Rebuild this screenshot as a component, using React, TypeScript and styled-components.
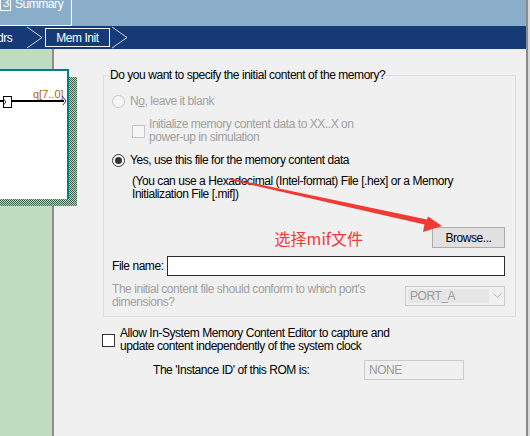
import React from "react";
import styled, { createGlobalStyle, css } from "styled-components";

const GlobalStyle = createGlobalStyle`
  html, body {
    margin: 0;
    padding: 0;
    background: #f0f0f0;
  }
  body {
    font-family: "Liberation Sans", Arial, sans-serif;
    font-size: 12px;
    letter-spacing: -0.45px;
    color: #000;
  }
`;

const Page = styled.div`
  position: relative;
  width: 530px;
  height: 436px;
  overflow: hidden;
  display: flex;
`;

const Column = styled.div`
  flex: 1;
  display: flex;
  flex-direction: column;
  min-width: 0;
`;

const EdgeStrip = styled.div`
  width: 2px;
  border-left: 2px solid #8a8a8a;
  background: #dadada;
`;

const TopBand = styled.div`
  height: 26px;
  background: #8aaeca;
  display: flex;
  align-items: flex-start;
`;

const Tab = styled.div`
  box-sizing: border-box;
  width: 73px;
  height: 26px;
  margin-left: -1px;
  border: 1px solid #fff;
  border-top: none;
  overflow: hidden;
`;

const TabInner = styled.div`
  display: flex;
  align-items: flex-end;
  gap: 4px;
  margin-top: -9px;
  color: #fff;
  line-height: 14px;
`;

const TabNum = styled.span`
  box-sizing: border-box;
  width: 11px;
  height: 20px;
  border: 1px solid #fff;
  display: flex;
  align-items: flex-end;
  justify-content: flex-end;
  padding: 0 1px 1px 0;
  line-height: 12px;
`;

const NavBand = styled.div`
  height: 23px;
  background: #153a76;
  display: flex;
  align-items: center;
  color: #fff;
`;

const Crumb = styled.span<{ $active?: boolean }>`
  box-sizing: border-box;
  height: 19px;
  display: flex;
  align-items: center;
  ${(p) =>
    p.$active &&
    css`
      border: 1px solid #f4f4f4;
      width: 65px;
      justify-content: center;
      margin: 0 2px;
    `}
`;

const CrumbText = styled.span`
  margin-left: -3px;
  width: 30px;
`;

const Main = styled.div`
  position: relative;
  flex: 1;
  display: flex;
`;

const SidePanel = styled.div`
  width: 52px;
  background: #c0dcc0;
  border-right: 2px solid #8c8c8c;
`;

const Content = styled.div`
  flex: 1;
  padding: 0 10px 0 49px;
  background: #f0f0f0;
`;

const GroupBox = styled.fieldset`
  margin: 19px 0 0 0;
  padding: 0 8px 7px 8px;
  border: 1px solid #dcdcdc;
  min-width: 0;
`;

const Legend = styled.legend`
  margin-left: -3px;
  padding: 0 1px;
  line-height: 14px;
`;

const Row = styled.div<{ $top: number; $indent?: number }>`
  display: flex;
  align-items: center;
  margin-top: ${(p) => p.$top}px;
  padding-left: ${(p) => p.$indent ?? 0}px;
  line-height: 13px;
`;

const Label = styled.span<{ $disabled?: boolean }>`
  color: ${(p) => (p.$disabled ? "#a0a0a0" : "#000")};
`;

const Radio = styled.span<{ $checked?: boolean; $disabled?: boolean }>`
  box-sizing: border-box;
  width: 13px;
  height: 13px;
  border-radius: 50%;
  border: 1px solid ${(p) => (p.$disabled ? "#c4c4c4" : "#333")};
  background: ${(p) => (p.$disabled ? "#f6f6f6" : "#fff")};
  margin-right: 5px;
  display: flex;
  align-items: center;
  justify-content: center;
  flex-shrink: 0;
  &::after {
    content: "";
    width: 7px;
    height: 7px;
    border-radius: 50%;
    background: #333;
    display: ${(p) => (p.$checked ? "block" : "none")};
  }
`;

const Check = styled.span<{ $disabled?: boolean }>`
  box-sizing: border-box;
  width: 13px;
  height: 13px;
  border: 1px solid ${(p) => (p.$disabled ? "#c4c4c4" : "#333")};
  background: ${(p) => (p.$disabled ? "#f6f6f6" : "#fff")};
  flex-shrink: 0;
`;

const Note = styled.div<{ $top: number; $indent: number; $disabled?: boolean }>`
  margin-top: ${(p) => p.$top}px;
  padding-left: ${(p) => p.$indent}px;
  line-height: 13px;
  color: ${(p) => (p.$disabled ? "#a0a0a0" : "#000")};
`;

const ButtonRow = styled.div`
  display: flex;
  justify-content: flex-end;
  align-items: center;
  gap: 69px;
  margin-top: 26px;
  padding-right: 2px;
`;

const RedNote = styled.span`
  font-family: "Noto Sans CJK SC", "Noto Sans", sans-serif;
  font-size: 16px;
  letter-spacing: 0;
  color: #f03a33;
  line-height: 18px;
`;

const Button = styled.button`
  box-sizing: border-box;
  width: 73px;
  height: 21px;
  border: 1px solid #adadad;
  background: #e1e1e1;
  font: inherit;
  letter-spacing: inherit;
  color: #000;
  padding: 0;
`;

const TextBox = styled.div<{ $width?: number; $disabled?: boolean }>`
  box-sizing: border-box;
  height: 20px;
  width: ${(p) => (p.$width ? `${p.$width}px` : "auto")};
  flex: ${(p) => (p.$width ? "none" : "1")};
  border: 1px solid ${(p) => (p.$disabled ? "#cccccc" : "#2b2b2b")};
  background: ${(p) => (p.$disabled ? "#f0f0f0" : "#fff")};
  color: #9a9a9a;
  display: flex;
  align-items: center;
  padding-left: 4px;
`;

const FileRow = styled.div`
  display: flex;
  align-items: center;
  gap: 3px;
  margin-top: 8px;
  padding-right: 2px;
`;

const PortRow = styled.div`
  display: flex;
  align-items: center;
  justify-content: space-between;
  margin-top: 7px;
  padding-right: 2px;
  line-height: 13px;
  color: #a0a0a0;
`;

const Select = styled.div`
  box-sizing: border-box;
  width: 100px;
  height: 20px;
  border: 1px solid #cccccc;
  background: #f0f0f0;
  display: flex;
  align-items: center;
  padding: 2px;
  gap: 4px;
`;

const SelectValue = styled.span`
  flex: 1;
  height: 100%;
  background: #e6e6e6;
  color: #9a9a9a;
  display: flex;
  align-items: center;
  padding-left: 2px;
`;

const EditorRow = styled.div`
  display: flex;
  align-items: center;
  gap: 5px;
  margin: 10px 0 0 -1px;
  line-height: 13px;
`;

const InstanceRow = styled.div`
  display: flex;
  align-items: center;
  margin-top: 7px;
  padding-left: 50px;
`;

const InstanceLabel = styled.span`
  width: 211px;
`;

const DiagramShadow = styled.div`
  position: absolute;
  left: -2px;
  top: 28px;
  width: 79px;
  height: 129px;
  background: repeating-conic-gradient(#3d6650 0 25%, #b9d0bd 0 50%) 0 0 / 2px 2px;
`;

const DiagramBox = styled.div`
  position: absolute;
  left: -2px;
  top: 20px;
  width: 71px;
  height: 130px;
  box-sizing: border-box;
  background: #fff;
  border-top: 2px solid #008080;
  border-right: 2px solid #008080;
  letter-spacing: 0;
`;

const Overlay = styled.svg`
  position: absolute;
  left: 0;
  top: 0;
  pointer-events: none;
`;

const Chevron = () => (
  <svg width="16" height="23" viewBox="0 0 16 23">
    <polyline points="0,1 15,11.5 0,22" fill="none" stroke="#c9d3e3" strokeWidth="1" />
  </svg>
);

export default function App() {
  return (
    <Page>
      <GlobalStyle />
      <Column>
        <TopBand>
          <Tab>
            <TabInner>
              <TabNum>3</TabNum>
              <span>Summary</span>
            </TabInner>
          </Tab>
        </TopBand>
        <NavBand>
          <CrumbText>drs</CrumbText>
          <Chevron />
          <Crumb $active>Mem Init</Crumb>
          <Chevron />
        </NavBand>
        <Main>
          <SidePanel />
          <Content>
            <GroupBox>
              <Legend>Do you want to specify the initial content of the memory?</Legend>
              <Row $top={13}>
                <Radio $disabled />
                <Label $disabled>
                  N<u>o</u>, leave it blank
                </Label>
              </Row>
              <Row $top={10} $indent={20}>
                <Check $disabled />
                <Note $top={0} $indent={4} $disabled>
                  Initialize memory content data to XX..X on
                  <br />
                  power-up in simulation
                </Note>
              </Row>
              <Row $top={10}>
                <Radio $checked />
                <Label>Yes, use this file for the memory content data</Label>
              </Row>
              <Note $top={8} $indent={20}>
                (You can use a Hexadecimal (Intel-format) File [.hex] or a Memory
                <br />
                Initialization File [.mif])
              </Note>
              <ButtonRow>
                <RedNote>选择mif文件</RedNote>
                <Button>Browse...</Button>
              </ButtonRow>
              <FileRow>
                <span>File name:</span>
                <TextBox />
              </FileRow>
              <PortRow>
                <span>
                  The initial content file should conform to which port's
                  <br />
                  dimensions?
                </span>
                <Select>
                  <SelectValue>PORT_A</SelectValue>
                  <svg width="9" height="6" viewBox="0 0 9 6">
                    <polyline points="0.5,0.5 4.5,4.5 8.5,0.5" fill="none" stroke="#b4b4b4" />
                  </svg>
                </Select>
              </PortRow>
            </GroupBox>
            <EditorRow>
              <Check />
              <span>
                Allow In-System Memory Content Editor to capture and
                <br />
                update content independently of the system clock
              </span>
            </EditorRow>
            <InstanceRow>
              <InstanceLabel>The 'Instance ID' of this ROM is:</InstanceLabel>
              <TextBox $width={100} $disabled>
                NONE
              </TextBox>
            </InstanceRow>
          </Content>
          <DiagramShadow />
          <DiagramBox>
            <svg width="69" height="128" viewBox="0 0 69 128">
              <rect x="5.5" y="25.5" width="8" height="11" fill="#fff" stroke="#000" />
              <polyline points="5.5,28 8,31 5.5,34" fill="none" stroke="#000" strokeWidth="0.8" />
              <line x1="0" y1="30" x2="5" y2="30" stroke="#000" strokeWidth="2" />
              <line x1="13" y1="30" x2="66" y2="30" stroke="#000" strokeWidth="2" />
              <text x="35" y="27" fontSize="11" fill="#b0660a" fontFamily="Liberation Sans, sans-serif">
                q[7..0]
              </text>
              <polyline points="64,25 68,30 65,34" fill="none" stroke="#1a1aff" strokeWidth="1" />
            </svg>
          </DiagramBox>
        </Main>
      </Column>
      <EdgeStrip />
      <Overlay width="530" height="436" viewBox="0 0 530 436">
        <polygon
          points="230,178.3 427,219.5 428,216.5 442,226 423,232 424.5,224.5 229.5,180"
          fill="#f03a33"
        />
      </Overlay>
    </Page>
  );
}
